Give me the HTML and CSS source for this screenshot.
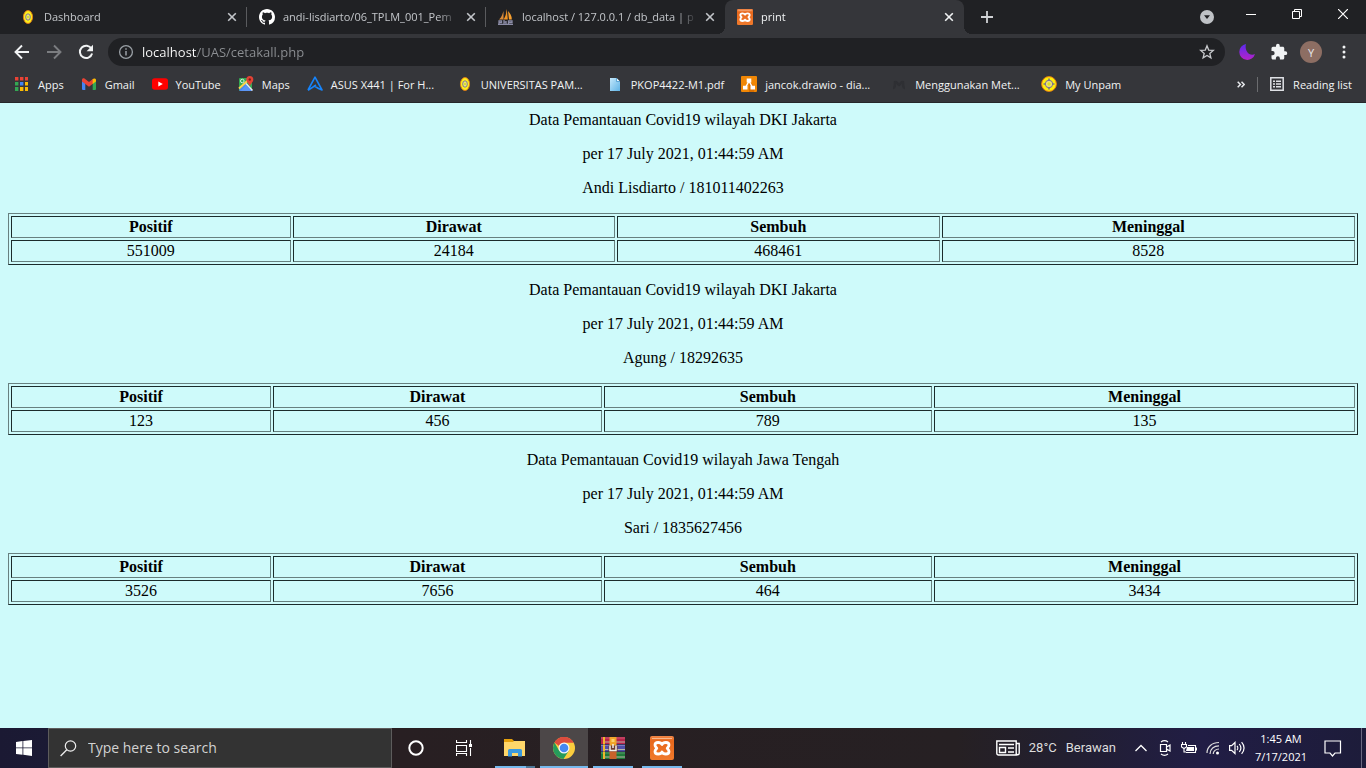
FILE: index.html
```html
<!DOCTYPE html>
<html lang="id">
<head>
<meta charset="utf-8">
<title>print</title>
<link rel="stylesheet" href="styles.css">
</head>
<body>
<svg class="defs" aria-hidden="true">
  <defs>
    <linearGradient id="moon" x1="0" y1="0" x2="0" y2="1"><stop offset="0" stop-color="#5b2bf0"/><stop offset="1" stop-color="#b622c8"/></linearGradient>
    <linearGradient id="orange" x1="0" y1="0" x2="0" y2="1"><stop offset="0" stop-color="#f0884a"/><stop offset=".2" stop-color="#e8681c"/><stop offset="1" stop-color="#f07a2c"/></linearGradient>
    <linearGradient id="paper" x1="0" y1="0" x2="1" y2="1"><stop offset="0" stop-color="#c4e8fb"/><stop offset="1" stop-color="#5fb3e6"/></linearGradient>
    <symbol id="close" viewBox="0 0 10 10"><path d="M1.2 1.2l7.6 7.6M8.8 1.2L1.2 8.8" stroke="currentColor" stroke-width="1.6" fill="none"/></symbol>
    <symbol id="crest" viewBox="0 0 16 16"><circle cx="8" cy="8" r="7.4" fill="#ffee0a" stroke="#e07a10"/><circle cx="8" cy="8" r="3.600" fill="#eee07a" stroke="#857d93" stroke-width="1.100"/><circle cx="8" cy="8" r="1.700" fill="#dbe51c"/><path d="M8 2.500v2.500M8 11v2.500M2.500 8H5M11 8h2.500" stroke="#778" stroke-width="1.600"/></symbol>
    <symbol id="oval" viewBox="0 0 16 16"><ellipse cx="8" cy="8" rx="4.600" ry="6.500" fill="#ffee1a" stroke="#dc7a16"/><ellipse cx="8" cy="8" rx="2.300" ry="3.200" fill="#f3e77c" stroke="#817993"/><circle cx="8" cy="8" r="1.200" fill="#d5e02c"/></symbol>
    <symbol id="xampp" viewBox="0 0 24 24"><rect width="24" height="24" rx="2" fill="url(#orange)"/><path d="M2 2.500h20" stroke="#f8b78c"/><path d="M12 8.500C11 6 5 5.500 5 9c0 2 1.800 2.500 1.800 3.200S5 13.500 5 15.500c0 3.500 6 3 7 .5 1 2.500 7 3 7-.5 0-2-1.800-2.600-1.800-3.300S19 11 19 9c0-3.500-6-3-7-.5z" stroke="#fff" stroke-width="2.800" fill="none" stroke-linejoin="round"/></symbol>
  </defs>
</svg>

<header class="browser">
  <nav class="tabs" aria-label="Tabs">
    <div class="tab">
      <svg class="icon" viewBox="0 0 16 16"><use href="#oval"/></svg>
      <a class="tab-title" href="#dashboard">Dashboard</a>
      <button class="tab-close" aria-label="Close Dashboard"><svg viewBox="0 0 10 10"><use href="#close"/></svg></button>
    </div>
    <div class="tab">
      <svg class="icon" viewBox="0 0 16 16"><path fill="#fff" d="M8 0C3.580 0 0 3.580 0 8c0 3.540 2.290 6.530 5.470 7.590.4.070.55-.17.55-.38 0-.19-.01-.82-.01-1.490-2.010.37-2.530-.49-2.690-.94-.09-.23-.48-.94-.82-1.130-.28-.15-.68-.52-.01-.53.63-.01 1.080.58 1.230.82.72 1.210 1.870.87 2.330.66.07-.52.28-.87.51-1.070-1.780-.2-3.640-.89-3.640-3.950 0-.87.31-1.590.82-2.150-.08-.2-.36-1.020.08-2.120 0 0 .67-.21 2.200.82.64-.18 1.320-.27 2-.27s1.360.09 2 .27c1.530-1.040 2.200-.82 2.200-.82.44 1.100.16 1.920.08 2.120.51.56.82 1.270.82 2.150 0 3.070-1.870 3.750-3.650 3.950.29.25.54.73.54 1.480 0 1.070-.01 1.930-.01 2.200 0 .21.15.46.55.38A8 8 0 0016 8c0-4.420-3.580-8-8-8z"/></svg>
      <a class="tab-title" href="#github">andi-lisdiarto/06_TPLM_001_Pem</a>
      <button class="tab-close" aria-label="Close repository"><svg viewBox="0 0 10 10"><use href="#close"/></svg></button>
    </div>
    <div class="tab">
      <svg class="icon" viewBox="0 0 16 16"><path d="M1 10.500C4 8 4.500 4.500 5.500 2v8.500z" fill="#d88a3a"/><path d="M5.500 10.500C8.500 6.500 8 3 8.800 0l1 10.500z" fill="#f29422"/><path d="M10 2c2 2 4 5 3.800 8.500H11z" fill="#f6a031"/><path d="M1 15v-3.200h2.500v1.700H1M6 11v4M8 12v3M6 13.200h2M10.500 15v-3.200H14v1.700h-3.500M0 15.300h15" stroke="#8b8ca6" stroke-width="1.300" fill="none"/></svg>
      <a class="tab-title" href="#phpmyadmin">localhost / 127.0.0.1 / db_data | p</a>
      <button class="tab-close" aria-label="Close phpMyAdmin"><svg viewBox="0 0 10 10"><use href="#close"/></svg></button>
    </div>
    <div class="tab active">
      <svg class="icon" viewBox="0 0 24 24"><use href="#xampp"/></svg>
      <a class="tab-title" href="#print" aria-current="page">print</a>
      <button class="tab-close" aria-label="Close print"><svg viewBox="0 0 10 10"><use href="#close"/></svg></button>
    </div>
    <button class="new-tab" aria-label="New tab"><svg viewBox="0 0 12 12"><path d="M6 0v12M0 6h12" stroke="#d0d2d5" stroke-width="1.800"/></svg></button>
    <div class="window-controls">
      <button aria-label="Search tabs"><svg width="14" height="14" viewBox="0 0 14 14" class="low"><circle cx="7" cy="7" r="7" fill="#bfc2c6"/><path d="M4 5.300h6L7 9z" fill="#202124"/></svg></button>
      <button aria-label="Minimize"><svg width="10" height="10" viewBox="0 0 10 10"><path d="M0 5.500h10" stroke="#fff"/></svg></button>
      <button aria-label="Restore"><svg width="10" height="10" viewBox="0 0 10 10"><path d="M.5 2.500h7v7h-7zM2.500 2.500v-2h7v7h-2" stroke="#fff" fill="none"/></svg></button>
      <button aria-label="Close window"><svg width="10" height="10" viewBox="0 0 10 10"><path d="M0 0l10 10M10 0L0 10" stroke="#fff" stroke-width="1.200"/></svg></button>
    </div>
  </nav>

  <div class="toolbar">
    <button class="tool" aria-label="Back"><svg width="16" height="16" viewBox="0 0 16 16"><path d="M15 8H2M8 1.500L1.500 8 8 14.500" stroke="#f1f3f4" stroke-width="1.900" fill="none"/></svg></button>
    <button class="tool" aria-label="Forward"><svg width="16" height="16" viewBox="0 0 16 16"><path d="M1 8h13M8 1.500L14.500 8 8 14.500" stroke="#7b7d80" stroke-width="1.900" fill="none"/></svg></button>
    <button class="tool" aria-label="Reload"><svg width="16" height="16" viewBox="0 0 16 16"><path d="M13.500 4.800A6.200 6.200 0 1 0 14.100 9.500" stroke="#f1f3f4" stroke-width="2" fill="none"/><path d="M15 .8v6.400H8.600z" fill="#f1f3f4"/></svg></button>
    <div class="address">
      <svg width="16" height="16" viewBox="0 0 16 16"><circle cx="8" cy="8" r="6.400" stroke="#9aa0a6" stroke-width="1.300" fill="none"/><path d="M8 7v4.500M8 4.200v1.600" stroke="#9aa0a6" stroke-width="1.500"/></svg>
      <input class="url" type="text" aria-label="Address" value="localhost/UAS/cetakall.php">
      <button class="star" aria-label="Bookmark this page"><svg width="16" height="16" viewBox="0 0 16 16"><path d="M8 1.800l1.700 4.300 4.600.3-3.500 3 1.100 4.500L8 11.400l-3.900 2.500 1.100-4.500-3.500-3 4.600-.3z" stroke="#c8cacd" stroke-width="1.300" fill="none"/></svg></button>
    </div>
    <div class="extensions">
      <button aria-label="Dark mode extension"><svg width="18" height="18" viewBox="0 0 18 18"><path d="M8 1a8 8 0 1 0 9 10C12 14 6 8 8 1z" fill="url(#moon)"/></svg></button>
      <button aria-label="Extensions"><svg width="18" height="18" viewBox="0 0 24 24"><path fill="#f1f3f4" d="M20.500 11H19V7c0-1.100-.9-2-2-2h-4V3.500a2.500 2.500 0 0 0-5 0V5H4a2 2 0 0 0-2 2v3.800h1.500a2.700 2.700 0 0 1 0 5.400H2V20c0 1.100.9 2 2 2h3.800v-1.500a2.700 2.700 0 0 1 5.400 0V22H17a2 2 0 0 0 2-2v-4h1.500a2.500 2.500 0 0 0 0-5z"/></svg></button>
      <button class="avatar" aria-label="Profile">Y</button>
      <button aria-label="Menu"><svg width="4" height="14" viewBox="0 0 4 14"><path d="M2 2h0M2 7h0M2 12h0" stroke="#f1f3f4" stroke-width="3" stroke-linecap="round"/></svg></button>
    </div>
  </div>

  <nav class="bookmarks" aria-label="Bookmarks">
    <a href="#apps"><svg class="icon" viewBox="0 0 16 16"><path fill="#ea4335" d="M1 1h4v4H1zM6 1h4v4H6zM11 1h3v4h-3z"/><path fill="#34a853" d="M1 6h4v4H1zM1 11h4v4H1z"/><path fill="#4285f4" d="M6 6h4v4H6z"/><path fill="#fbbc04" d="M11 6h3v4h-3zM6 11h4v4H6zM11 11h3v4h-3z"/><path d="M5.200 0v16M10.200 0v16M0 5.200h16M0 10.200h16" stroke="#35363a" stroke-width="1.600"/></svg>Apps</a>
    <a href="#gmail"><svg class="icon" viewBox="0 0 16 16"><path fill="#4285f4" d="M1 5l3.300 2.200V14H2a1 1 0 0 1-1-1z"/><path fill="#34a853" d="M15 5l-3.300 2.200V14H14a1 1 0 0 0 1-1z"/><path fill="#ea4335" d="M1 3.800C1 2.200 2.600 1.800 3.800 2.700L8 6l4.200-3.300v4.800L8 10.700 1 5.500z"/><path fill="#fbbc04" d="M11.700 3.100c1.300-1.200 3.300-.8 3.300.8v1.600l-3.300 2.400z"/></svg>Gmail</a>
    <a href="#youtube"><svg class="icon" viewBox="0 0 16 16"><rect y="2.300" width="16" height="11.500" rx="2.800" fill="#f00"/><path d="M6.300 5.500l4.500 2.500-4.500 2.500z" fill="#fff"/></svg>YouTube</a>
    <a href="#maps"><svg class="icon" viewBox="0 0 16 16"><rect x="1" y="2" width="13" height="13" rx="1" fill="#34a853"/><path d="M1 14L8 7l6 7v1H2z" fill="#4a89f3"/><path d="M1 12.500l10-9" stroke="#ffd44c" stroke-width="2"/><path d="M8 7.500l6.500 7" stroke="#e8eaed" stroke-width="1.500"/><path d="M2.500 15L8 9l5 6z" fill="#5b95f5"/><circle cx="4.300" cy="5" r="1.800" stroke="#d7f0dd" fill="none"/><path d="M8.300 3.500a3.500 3.500 0 0 1 7 0c0 2.500-2.500 3.500-3.500 7-1-3.500-3.500-4.500-3.500-7z" fill="#e34335"/><circle cx="11.800" cy="3.500" r="1.200" fill="#801d17"/></svg>Maps</a>
    <a class="long" href="#asus"><svg class="icon" viewBox="0 0 16 16"><path d="M1 14L8 1.200 15 14l-3.500-1.500L7 9.800M1 14.300l8-5.300" stroke="#1684fb" stroke-width="1.600" fill="none" stroke-linejoin="round"/></svg>ASUS X441 | For H...</a>
    <a class="long" href="#universitas"><svg class="icon" viewBox="0 0 16 16"><use href="#oval"/></svg>UNIVERSITAS PAM...</a>
    <a href="#pdf"><svg class="icon" viewBox="0 0 16 16"><path d="M3 2h6.500L13 5.500V15H3z" fill="url(#paper)"/><path d="M9.500 2v3.500H13" fill="#e8f7ff" stroke="#4898ce" stroke-width=".8"/></svg>PKOP4422-M1.pdf</a>
    <a class="long" href="#drawio"><svg class="icon" viewBox="0 0 16 16"><rect width="16" height="16" rx="1" fill="#f08705"/><path d="M8 5l6 6-1 5H8z" fill="#d96f00"/><path d="M8 5L4.500 11.500M8 5l3.500 6.500" stroke="#fff" stroke-width="1.500"/><path d="M5.700 2.500h4.600v4H5.700zM2 9.700h4.500v3.800H2zM9.500 9.700H14v3.800H9.500z" fill="#fff"/></svg>jancok.drawio - dia...</a>
    <a class="long" href="#mendeley"><svg class="icon" viewBox="0 0 16 16"><path d="M2 12c2 0 2-2 2-6 2-1 3 3 4 3s2-4 4-3c0 4 0 6 2 6" stroke="#2e2f33" stroke-width="2.400" fill="none"/></svg>Menggunakan Met...</a>
    <a href="#unpam"><svg class="icon" viewBox="0 0 16 16"><use href="#crest"/></svg>My Unpam</a>
    <span class="bookmarks-end">
      <button aria-label="More bookmarks"><svg width="8" height="7" viewBox="0 0 8 7"><path d="M.7.700l2.700 2.800L.7 6.300M4.500.7l2.700 2.800-2.700 2.800" stroke="#e8eaed" stroke-width="1.500" fill="none"/></svg></button>
      <button class="reading"><svg width="14" height="14" viewBox="0 0 14 14"><path d="M.8.800h12.400v12.400H.8z" stroke="#dfe1e5" stroke-width="1.500" fill="none"/><path d="M3 4.200h2M3 7h2M3 9.800h2M6 4.200h5M6 7h5M6 9.800h5" stroke="#dfe1e5" stroke-width="1.500"/></svg>Reading list</button>
    </span>
  </nav>
</header>

<main class="page">
  <section class="report">
    <p>Data Pemantauan Covid19 wilayah DKI Jakarta</p>
    <p>per 17 July 2021, 01:44:59 AM</p>
    <p>Andi Lisdiarto / 181011402263</p>
    <table>
      <tr><th>Positif</th><th>Dirawat</th><th>Sembuh</th><th>Meninggal</th></tr>
      <tr><td>551009</td><td>24184</td><td>468461</td><td>8528</td></tr>
    </table>
  </section>
  <section class="report">
    <p>Data Pemantauan Covid19 wilayah DKI Jakarta</p>
    <p>per 17 July 2021, 01:44:59 AM</p>
    <p>Agung / 18292635</p>
    <table>
      <tr><th>Positif</th><th>Dirawat</th><th>Sembuh</th><th>Meninggal</th></tr>
      <tr><td>123</td><td>456</td><td>789</td><td>135</td></tr>
    </table>
  </section>
  <section class="report">
    <p>Data Pemantauan Covid19 wilayah Jawa Tengah</p>
    <p>per 17 July 2021, 01:44:59 AM</p>
    <p>Sari / 1835627456</p>
    <table>
      <tr><th>Positif</th><th>Dirawat</th><th>Sembuh</th><th>Meninggal</th></tr>
      <tr><td>3526</td><td>7656</td><td>464</td><td>3434</td></tr>
    </table>
  </section>
</main>

<footer class="taskbar">
  <button class="task" aria-label="Start"><svg width="16" height="16" viewBox="0 0 16 16"><path fill="#fff" d="M0 2l6.500-.9v6.400H0zM7.300 1L16 0v7.500H7.300zM0 8.300h6.500v6.400L0 13.900zM7.300 8.300H16V16l-8.700-1.200z"/></svg></button>
  <label class="search">
    <svg width="17" height="17" viewBox="0 0 17 17"><circle cx="10.500" cy="6" r="5.200" stroke="#eee" stroke-width="1.200" fill="none"/><path d="M6.800 9.700L.6 16" stroke="#eee" stroke-width="1.300"/></svg>
    <input type="text" placeholder="Type here to search" aria-label="Type here to search">
  </label>
  <div class="system">
    <button class="task" aria-label="Cortana"><svg width="16" height="16" viewBox="0 0 16 16"><circle cx="8" cy="8" r="6.700" stroke="#fff" stroke-width="2" fill="none"/></svg></button>
    <button class="task" aria-label="Task view"><svg width="16" height="16" viewBox="0 0 16 16"><path d="M.5 0v2.500h10V0M.5 5.500h10v6H.5zM.5 16v-2.500h10V16M14.500 0v4M14.500 8v8" stroke="#fff" stroke-width="1.100" fill="none"/><path d="M13 4h3v3h-3z" fill="#fff"/></svg></button>
  </div>
  <div class="apps">
    <button class="task open stacked" aria-label="File Explorer"><svg width="24" height="24" viewBox="0 0 24 24"><path d="M1 3h8l2 2h11v4H1z" fill="#e6a10c"/><path d="M1 6h9l1-1h11v15H1z" fill="#ffd76a"/><path d="M5 20.500v-6a1.500 1.500 0 0 1 1.500-1.500h11a1.500 1.500 0 0 1 1.500 1.500v6h-4V17H9v3.500z" fill="#3b9ade"/></svg></button>
    <button class="task open current" aria-label="Google Chrome"><svg width="24" height="24" viewBox="0 0 24 24"><circle cx="12" cy="12" r="11" fill="#fbcd3e"/><path d="M12 12L2.500 6.500A11 11 0 0 1 21.500 6.500H12z" fill="#da4b3c"/><path d="M12 12l4.800 2.800L11.500 23A11 11 0 0 1 2.500 6.500l4.700 8.200z" fill="#259b5b"/><path d="M2.500 6.500A11 11 0 0 1 21.500 6.500H12A5.500 5.500 0 0 0 7 10z" fill="#dc4c3e"/><circle cx="12" cy="12" r="5.500" fill="#f4f6f8"/><circle cx="12" cy="12" r="4.300" fill="#4488f2"/></svg></button>
    <button class="task open" aria-label="WinRAR"><svg width="24" height="24" viewBox="0 0 24 24"><path d="M0 1h24v7H0z" fill="#b8244a"/><path d="M0 8.500h24v7H0z" fill="#504ea8"/><path d="M0 16h24v7H0z" fill="#1f7a38"/><path d="M0 2h24M0 9.500h24M0 17h24" stroke="#fff" stroke-opacity=".25"/><path d="M4 6h20M4 13.500h20M4 21h20" stroke="#b9b6a8" stroke-width="1"/><path d="M3 1v7M3 8.500v7M3 16v7" stroke="#f0b62c" stroke-width="2"/><path d="M8.500 14.500h7V23h-7z" fill="#c8622a"/><path d="M8.500 1h7v9h-7z" fill="#f0a52a"/><path d="M10.500 3h3v3h-3z" fill="#fcd06a"/><path d="M7.500 9.500h9v6h-9z" fill="#6e3d30"/><path d="M9 9.500v5h6v-5M12 8v4" stroke="#f2f0ec" stroke-width="1.500" fill="none"/></svg></button>
    <button class="task open" aria-label="XAMPP"><svg width="24" height="24" viewBox="0 0 24 24"><use href="#xampp"/></svg></button>
  </div>
  <div class="tray">
    <button class="weather"><svg width="24" height="16" viewBox="0 0 24 16"><path d="M.8 1h19.400v14H2.500A1.700 1.700 0 0 1 .8 13.300zM20.200 3.500h3v9.800a1.500 1.500 0 0 1-3 0M3 4.500h15M3.500 7.500h6v5h-6zM12 8h6M12 12h6" stroke="#fff" stroke-width="1.400" fill="none"/></svg><span>28°C</span><span>Berawan</span></button>
    <button class="status" aria-label="Show hidden icons"><svg width="12" height="8" viewBox="0 0 12 8"><path d="M.5 7L6 1.500 11.500 7" stroke="#fff" stroke-width="1.300" fill="none"/></svg></button>
    <button class="status" aria-label="Meet now"><svg width="12" height="16" viewBox="0 0 12 16"><path d="M1.500 4.500h6v7h-6zM7.500 7l3.500-2v6L7.500 9M2 2c2-1.500 5-1.500 7 0M2 14c2 1.500 5 1.500 7 0" stroke="#fff" stroke-width="1.200" fill="none"/></svg></button>
    <button class="status" aria-label="Battery"><svg width="16" height="12" viewBox="0 0 16 12"><path d="M1.500 0v2M4.500 0v2M.5 2.500h5V5L3 6.500 .5 5zM3 6.500V10h2M7 3.500h7.500v7H5M15.500 5.500v3" stroke="#fff" stroke-width="1.100" fill="none"/><path d="M6 5h7v4H5z" fill="#fff"/></svg></button>
    <button class="status" aria-label="Wi-Fi"><svg width="14" height="14" viewBox="0 0 14 14"><path d="M1 12C1 6 6 1.500 13 1.500M4 13C4 8 8 4.800 13 4.800M7.200 13C7.200 10 10 8 13 8" stroke="#ddd" stroke-width="1.200" fill="none"/><circle cx="11.500" cy="12" r="1.500" fill="#fff"/></svg></button>
    <button class="status" aria-label="Volume"><svg width="16" height="14" viewBox="0 0 16 14"><path d="M.6 4.700h2L6 1.500v11L2.600 9.300h-2zM8 5c1 1 1 3 0 4M10.300 3c2 2.500 2 5.500 0 8M12.600 1.200c3 3.500 3 8 0 11.600" stroke="#fff" stroke-width="1.200" fill="none"/></svg></button>
    <time class="clock" datetime="2021-07-17T01:45"><span>1:45 AM</span><span>7/17/2021</span></time>
    <button class="notice" aria-label="Notifications"><svg width="18" height="17" viewBox="0 0 18 17"><path d="M1 1h15.500v12H11l-2.500 3L6 13H1z" stroke="#fff" stroke-width="1.200" fill="none"/></svg></button>
  </div>
</footer>
</body>
</html>
```
FILE: styles.css
```css
* { box-sizing: border-box; }

body {
  margin: 0;
  min-height: 100vh;
  display: flex;
  flex-direction: column;
  font-family: "Open Sans", "Noto Sans", sans-serif;
  font-size: 11px;
  color: #e8eaed;
  background: #cefafa;
}

button {
  margin: 0;
  padding: 0;
  border: 0;
  background: none;
  color: inherit;
  font: inherit;
  display: flex;
  align-items: center;
  justify-content: center;
}

a { color: inherit; text-decoration: none; }
svg { display: block; flex: none; }
.defs { position: absolute; width: 0; height: 0; }
.icon { width: 16px; height: 16px; }

/* Browser frame */
.browser {
  background: #35363a;
  border-bottom: 1px solid #26272a;
}

.tabs {
  display: flex;
  height: 34px;
  padding-left: 8px;
  background: #202124;
}

.tab {
  flex: 0 1 239px;
  min-width: 0;
  display: flex;
  align-items: center;
  gap: 8px;
  padding: 0 10px 0 12px;
  color: #c3c6ca;
  background: linear-gradient(#5a5b5e, #5a5b5e) right center / 1px 20px no-repeat;
}

.tab:nth-child(3) { background: none; }

.tab.active {
  position: relative;
  color: #f1f3f4;
  background: #35363a;
  border-radius: 8px 8px 0 0;
}

.tab.active::before,
.tab.active::after {
  content: "";
  position: absolute;
  bottom: 0;
  width: 8px;
  height: 8px;
}

.tab.active::before {
  right: 100%;
  background: radial-gradient(circle at 0 0, #202124 8px, #35363a 8px);
}

.tab.active::after {
  left: 100%;
  background: radial-gradient(circle at 100% 0, #202124 8px, #35363a 8px);
}

.tab-title {
  flex: 1;
  overflow: hidden;
  white-space: nowrap;
  line-height: 20px;
  mask-image: linear-gradient(to right, #000 calc(100% - 20px), transparent);
}

.tab-close svg { width: 10px; height: 10px; }
.new-tab { width: 46px; }
.new-tab svg { width: 12px; height: 12px; }

.window-controls {
  display: flex;
  margin-left: auto;
  height: 28px;
}

.window-controls button { width: 46px; }
.window-controls .low { margin: 6px 0 0 4px; }

.toolbar {
  display: flex;
  align-items: center;
  height: 36px;
  padding: 0 6px;
}

.tool { width: 32px; height: 32px; }

.address {
  flex: 1;
  display: flex;
  align-items: center;
  gap: 8px;
  height: 28px;
  margin-left: 6px;
  padding: 0 10px;
  border-radius: 14px;
  background: #202124;
}

.url {
  flex: 1;
  min-width: 0;
  padding: 0;
  border: 0;
  outline: 0;
  font: 13px/20px "Open Sans", "Noto Sans", sans-serif;
  color: transparent;
  background: linear-gradient(to right, #fff 55px, #8d9094 55px);
  background-clip: text;
}

.extensions {
  display: flex;
  align-items: center;
  padding-left: 6px;
}

.extensions button { width: 32px; }

.extensions .avatar {
  width: 22px;
  height: 22px;
  margin: 0 6px 0 5px;
  border-radius: 50%;
  background: #8d6e63;
}

.bookmarks {
  display: flex;
  align-items: center;
  gap: 17px;
  height: 32px;
  padding: 0 14px 4px;
  white-space: nowrap;
  color: #f1f3f4;
}

.bookmarks a {
  display: flex;
  align-items: center;
  gap: 8px;
}

.bookmarks .long { width: 133px; }

.bookmarks-end {
  display: flex;
  gap: 12px;
  margin-left: auto;
}

.reading {
  gap: 9px;
  padding-left: 12px;
  border-left: 1px solid #6b6c6f;
}

/* Printed page */
.page {
  flex: 1;
  padding: 8px;
  font: 16px/18px "Liberation Serif", "Times New Roman", serif;
  color: #000;
  text-align: center;
}

.report { margin-bottom: 16px; }
.report p { margin: 0 0 16px; }

.report table {
  width: 100%;
  border-spacing: 2px;
  border: 1px solid;
  border-color: #67807f #1b2b2b #1b2b2b #67807f;
}

.report th,
.report td {
  padding: 1px;
  border: 1px solid;
  border-color: #1b2b2b #67807f #67807f #1b2b2b;
}

/* Taskbar */
.taskbar {
  display: flex;
  height: 40px;
  color: #fff;
  background: linear-gradient(to right, #1b1933 0, #1b1a34 48px, #281f22 392px, #262023 70%, #221f30 78%, #211d45 88%, #1d1c3a);
}

.task { width: 48px; height: 40px; }

.search {
  flex: 0 1 344px;
  display: flex;
  align-items: center;
  gap: 11px;
  padding: 0 11px;
  border: 1px solid #5d5c5c;
  background: #333;
}

.search input {
  flex: 1;
  min-width: 0;
  padding: 0;
  border: 0;
  outline: 0;
  background: none;
  color: #fff;
  font: 14px/20px "Open Sans", "Noto Sans", sans-serif;
}

.search input::placeholder { color: #d2d2d2; }
.system { display: flex; }

.apps {
  display: flex;
  gap: 1px;
  padding-left: 3px;
}

.open { background: linear-gradient(#76b9ed, #76b9ed) center bottom / 40px 2px no-repeat; }
.stacked { background-image: linear-gradient(to right, #76b9ed 31px, #4e7797 31px); }
.current { background-color: #4c4748; background-size: 48px 2px; }

.tray {
  display: flex;
  align-items: center;
  margin-left: auto;
  padding-right: 4px;
}

.weather {
  gap: 9px;
  margin-right: 13px;
  font: 13px/20px Roboto, sans-serif;
  color: #ddd;
}

.status { width: 24px; height: 40px; }

.clock {
  display: grid;
  width: 64px;
  text-align: center;
  line-height: 18px;
}

.notice {
  width: 49px;
  height: 40px;
  padding-right: 8px;
  border-right: 1px solid #6a6880;
}
```
